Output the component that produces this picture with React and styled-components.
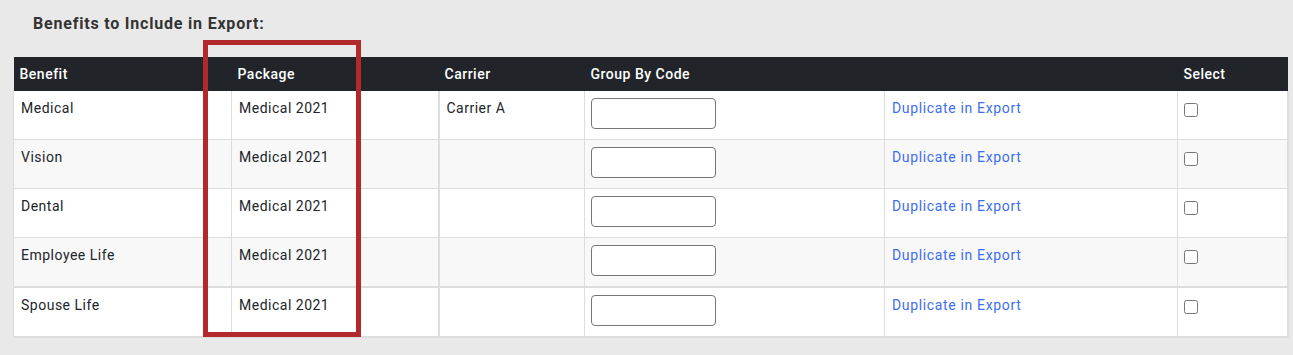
import styled, { createGlobalStyle } from "styled-components";

const GlobalStyle = createGlobalStyle`
  html, body {
    margin: 0;
    padding: 0;
    background: #e9e9e9;
  }
  body {
    font-family: 'Roboto', 'Liberation Sans', sans-serif;
    color: #212529;
  }
`;

const columns = [
  { title: "Benefit", width: 218 },
  { title: "Package", width: 207 },
  { title: "Carrier", width: 146 },
  { title: "Group By Code", width: 300 },
  { title: "", width: 293 },
  { title: "Select", width: 110 },
];

const benefits = [
  { name: "Medical", pkg: "Medical 2021", carrier: "Carrier A" },
  { name: "Vision", pkg: "Medical 2021", carrier: "" },
  { name: "Dental", pkg: "Medical 2021", carrier: "" },
  { name: "Employee Life", pkg: "Medical 2021", carrier: "" },
  { name: "Spouse Life", pkg: "Medical 2021", carrier: "" },
];

export default function App() {
  return (
    <>
      <GlobalStyle />
      <Page>
        <Title>Benefits to Include in Export:</Title>

        <Table>
          <colgroup>
            {columns.map((c, i) => (
              <col key={i} style={{ width: c.width }} />
            ))}
          </colgroup>
          <thead>
            <tr>
              {columns.map((c, i) => (
                <HeadCell key={i}>{c.title}</HeadCell>
              ))}
            </tr>
          </thead>
          <tbody>
            {benefits.map((b, i) => (
              <Row key={b.name} $striped={i % 2 === 1} $thick={i === 3}>
                <Cell $first>{b.name}</Cell>
                <Cell>{b.pkg}</Cell>
                <Cell $heavy>{b.carrier}</Cell>
                <Cell $tight>
                  <CodeInput type="text" />
                </Cell>
                <Cell>
                  <DuplicateLink href="#">Duplicate in Export</DuplicateLink>
                </Cell>
                <Cell $last>
                  <SelectBox type="checkbox" />
                </Cell>
              </Row>
            ))}
          </tbody>
        </Table>

        <Highlight />
      </Page>
    </>
  );
}

const Page = styled.div`
  position: relative;
  width: 1293px;
  height: 355px;
  box-sizing: border-box;
  padding: 12px 5px 0 13px;
`;

const Title = styled.div`
  padding-left: 20px;
  font-size: 16px;
  font-weight: 700;
  line-height: 24px;
  color: #333333;
  letter-spacing: 0.8px;
  margin-bottom: 21px;
`;

const Table = styled.table`
  border-collapse: collapse;
  table-layout: fixed;
  width: 1275px;
  font-size: 14px;
  letter-spacing: 0.5px;
`;

const HeadCell = styled.th`
  background: #212529;
  color: #ffffff;
  font-weight: 500;
  text-align: left;
  height: 34px;
  padding: 0 7px 0 6px;
  box-sizing: border-box;
  line-height: 34px;
`;

const Row = styled.tr`
  background: ${(p) => (p.$striped ? "#f8f8f8" : "#ffffff")};
  border-bottom: ${(p) => (p.$thick ? "2px" : "1px")} solid #dddddd;

  &:last-child {
    border-bottom: 2px solid #dddddd;
  }
`;

const Cell = styled.td`
  height: 48px;
  padding: 7px 7px 10px ${(p) => (p.$tight ? "6px" : "7px")};
  box-sizing: border-box;
  vertical-align: top;
  line-height: 20px;
  color: #212529;
  border-left: ${(p) => (p.$heavy ? "2px" : "1px")} solid #dddddd;
  ${(p) => p.$last && "border-right: 2px solid #dddddd;"}
`;

const CodeInput = styled.input`
  display: block;
  width: 125px;
  height: 31px;
  box-sizing: border-box;
  border: 1px solid #767676;
  border-radius: 4px;
  background: #ffffff;
  padding: 0 8px;
  font: inherit;
`;

const DuplicateLink = styled.a`
  color: #3d6ef0;
  text-decoration: none;
  letter-spacing: 0.65px;
`;

const SelectBox = styled.input`
  display: block;
  margin: 5px 0 0 -1px;
  width: 14px;
  height: 14px;
`;

const Highlight = styled.div`
  position: absolute;
  left: 203px;
  top: 40px;
  width: 158px;
  height: 297px;
  box-sizing: border-box;
  border: 5px solid #b3292b;
  pointer-events: none;
`;
